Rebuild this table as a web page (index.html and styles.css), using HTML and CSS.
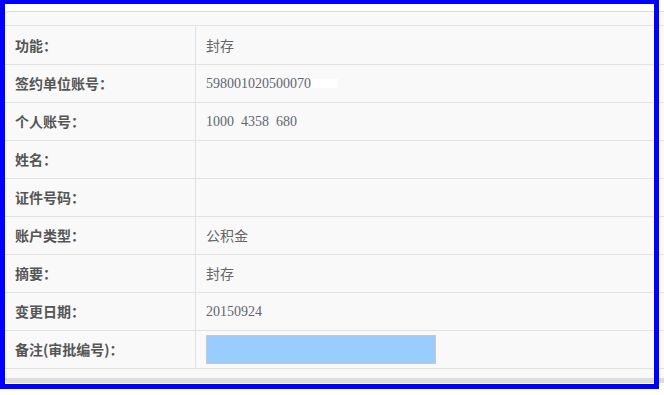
FILE: index.html
```html
<!DOCTYPE html>
<html lang="zh-CN">
<head>
<meta charset="utf-8">
<title>账户变更信息</title>
<link rel="stylesheet" href="styles.css">
</head>
<body>
<div class="page">
  <div class="panel">
    <div class="panel-head"></div>
    <table class="info">
      <tr><th>功能：</th><td>封存</td></tr>
      <tr><th>签约单位账号：</th><td><span class="num">598001020500070</span><span class="mask"></span></td></tr>
      <tr><th>个人账号：</th><td><span class="num">1000&nbsp;&nbsp;4358&nbsp;&nbsp;680</span></td></tr>
      <tr><th>姓名：</th><td></td></tr>
      <tr><th>证件号码：</th><td></td></tr>
      <tr><th>账户类型：</th><td>公积金</td></tr>
      <tr><th>摘要：</th><td>封存</td></tr>
      <tr><th>变更日期：</th><td><span class="num">20150924</span></td></tr>
      <tr><th>备注(审批编号)：</th><td><input class="remark" type="text"></td></tr>
    </table>
  </div>
</div>
<div class="frame"></div>
</body>
</html>
```
FILE: styles.css
```css
html, body {
  margin: 0;
  padding: 0;
  background: #ffffff;
}

body {
  width: 664px;
  height: 395px;
  overflow: hidden;
  position: relative;
  font-family: "Noto Sans CJK SC", "Liberation Sans", sans-serif;
}

.page {
  padding: 11px 0 0 5px;
}

.panel {
  background: #f9f9f9;
  border-top: 1px solid #dcdcdc;
  border-bottom: 5px solid #dcdcdc;
  border-radius: 4px 0 0 4px;
  padding-bottom: 9px;
}

.panel-head {
  height: 13px;
  border-bottom: 1px solid #e2e2e2;
}

.info {
  width: 100%;
  border-collapse: collapse;
  font-size: 14px;
}

.info tr {
  height: 38px;
  border-bottom: 1px solid #e2e2e2;
}

.info th {
  width: 180px;
  padding: 0 0 0 10px;
  text-align: left;
  font-weight: bold;
  color: #555555;
  border-right: 1px solid #e2e2e2;
  vertical-align: middle;
  line-height: 16px;
}

.info td {
  padding: 0 0 0 10px;
  color: #666666;
  vertical-align: middle;
  line-height: 16px;
}

.num {
  font-family: "Liberation Serif", serif;
  font-size: 14px;
  color: #5f6670;
}

.mask {
  display: inline-block;
  width: 27px;
  height: 9px;
  background: #ffffff;
  vertical-align: baseline;
}

.remark {
  display: block;
  box-sizing: border-box;
  width: 230px;
  height: 29px;
  margin: 1px 0 0;
  padding: 0;
  border: 1px solid #c8c8c8;
  background: #99ccff;
}

.frame {
  position: absolute;
  left: 0;
  top: 0;
  width: 659px;
  height: 389px;
  box-sizing: border-box;
  border-style: solid;
  border-color: #0000ff;
  border-width: 4px 5px 5px 5px;
  pointer-events: none;
}
```
